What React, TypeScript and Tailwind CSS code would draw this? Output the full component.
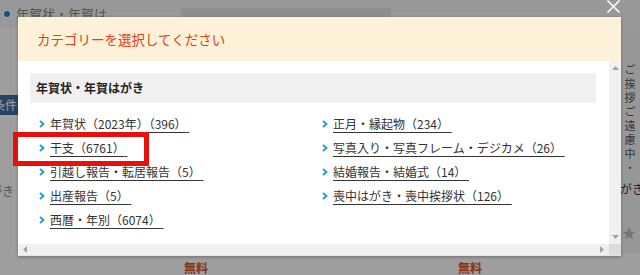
const left = [
  "年賀状（2023年）（396）",
  "干支（6761）",
  "引越し報告・転居報告（5）",
  "出産報告（5）",
  "西暦・年別（6074）",
];
const right = [
  "正月・縁起物（234）",
  "写真入り・写真フレーム・デジカメ（26）",
  "結婚報告・結婚式（14）",
  "喪中はがき・喪中挨拶状（126）",
];

function Chevron() {
  return (
    <svg width="6" height="8" viewBox="0 0 6 8" className="shrink-0">
      <polyline points="1,1 4.5,4 1,7" fill="none" stroke="#1b9be0" strokeWidth="1.8" />
    </svg>
  );
}

function Item({ label }: { label: string }) {
  return (
    <li className="flex items-center h-6 gap-[5px]">
      <Chevron />
      <a className="text-[12px] text-[#333] underline underline-offset-[3px] decoration-[#333] whitespace-nowrap">
        {label}&nbsp;
      </a>
    </li>
  );
}

export default function App() {
  return (
    <div
      className="relative w-[640px] h-[275px] overflow-hidden bg-white"
      style={{ fontFamily: '"Noto Sans CJK JP", "Noto Sans", sans-serif' }}
    >
      {/* page behind the dialog */}
      <div className="flex flex-col h-full">
        <div className="flex items-center h-[28px] bg-[#f6f6f6] gap-1 pl-[2px]">
          <span className="w-[10px] h-[10px] rounded-full bg-[#1e88d8] border-2 border-white" />
          <span className="text-[13px] text-[#888]">年賀状・年賀は</span>
          <div className="ml-[70px] w-[210px] h-[12px] bg-[#e6e6e6]" />
        </div>
        <div className="flex flex-1">
          <div className="w-[18px] flex flex-col">
            <div className="mt-[67px] h-[20px] bg-[#3c6fa8] text-white text-[12px] leading-[20px] -ml-[8px] pl-[1px] whitespace-nowrap">条件</div>
            <div className="mt-[67px] text-[12px] text-[#888] whitespace-nowrap -ml-[10px]">がき</div>
          </div>
          <div className="flex-1" />
          <div className="w-[19px] flex flex-col items-start bg-[#f4f4f4] overflow-hidden">
            <div className="mt-[36px] ml-[2px] text-[11px] leading-[14px] tracking-[3px] text-[#555] [writing-mode:vertical-rl] [text-orientation:upright]">
              ご挨拶ご遠慮中・
            </div>
            <div className="mt-[4px] text-[12px] text-[#333] whitespace-nowrap -ml-[1px]">がき</div>
            <div className="mt-[24px] text-[14px] text-[#bbb] pl-[1px]">★</div>
          </div>
        </div>
        <div className="flex h-[22px] text-[12px] text-[#d9533a] font-bold">
          <span className="ml-[184px] mt-[6px]">無料</span>
          <span className="ml-[250px] mt-[6px]">無料</span>
        </div>
      </div>

      {/* overlay */}
      <div className="absolute inset-0 bg-black/[0.38]" />

      {/* close */}
      <svg className="absolute right-[19px] top-0" width="15" height="13" viewBox="0 0 15 13">
        <path d="M1.5 0.5 L13.5 12.5 M13.5 0.5 L1.5 12.5" stroke="#fff" strokeWidth="1.6" />
      </svg>

      {/* dialog */}
      <div className="absolute left-[18px] top-[17px] w-[603px] h-[239px] bg-white flex flex-col shadow-[0_1px_3px_rgba(0,0,0,0.3)] border-b border-[#e4e4e4]">
        <div className="h-[44px] shrink-0 bg-[#fdf2d8] flex items-center pl-[19px]">
          <h2 className="text-[13.5px] text-[#e23d1c]">カテゴリーを選択してください</h2>
        </div>
        <div className="flex flex-1 min-h-0">
          <div className="flex-1 pl-[12px] pr-[13px] pt-[12px]">
            <div className="h-[30px] bg-[#f0f0f0] flex items-center pl-[6px]">
              <h3 className="text-[12px] font-bold text-[#222]">年賀状・年賀はがき</h3>
            </div>
            <div className="grid grid-cols-[283px_1fr] mt-[9px] pl-[9px]">
              <ul>
                {left.map((l) => (
                  <Item key={l} label={l} />
                ))}
              </ul>
              <ul>
                {right.map((l) => (
                  <Item key={l} label={l} />
                ))}
              </ul>
            </div>
          </div>
          <div className="w-[12px] bg-[#f0f0f0] flex flex-col items-center justify-between py-[5px]">
            <svg width="7" height="4" viewBox="0 0 7 4"><path d="M0 4 L3.5 0 L7 4Z" fill="#a3a3a3" /></svg>
            <svg width="7" height="4" viewBox="0 0 7 4"><path d="M0 0 L3.5 4 L7 0Z" fill="#a3a3a3" /></svg>
          </div>
        </div>
        <div className="h-[11px] shrink-0 flex">
          <div className="flex-1 bg-[#f0f0f0] flex items-center justify-between px-[5px]">
            <svg width="4" height="7" viewBox="0 0 4 7"><path d="M4 0 L0 3.5 L4 7Z" fill="#a3a3a3" /></svg>
            <svg width="4" height="7" viewBox="0 0 4 7"><path d="M0 0 L4 3.5 L0 7Z" fill="#a3a3a3" /></svg>
          </div>
          <div className="w-[12px] bg-[#dcdcdc]" />
        </div>
      </div>

      {/* annotation */}
      <div className="absolute left-[13px] top-[132px] w-[136px] h-[34px] border-[5px] border-[#e8100c]" />
    </div>
  );
}
